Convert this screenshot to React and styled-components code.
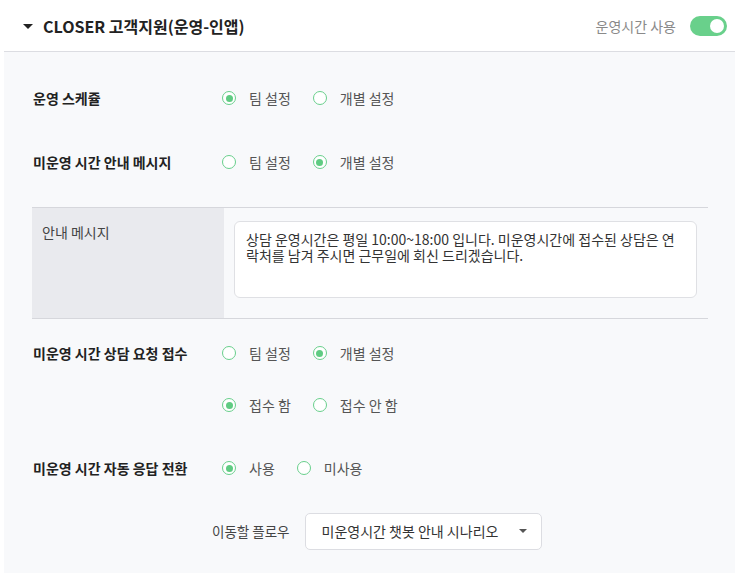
import React, { useState } from "react"
import styled, { createGlobalStyle } from "styled-components"

const GlobalStyle = createGlobalStyle`
  html, body {
    margin: 0;
    padding: 0;
    background: #ffffff;
  }
  body {
    font-family: "Noto Sans CJK KR", "Noto Sans", sans-serif;
    color: #222;
  }
`

const Page = styled.div`
  width: 738px;
  height: 573px;
  overflow: hidden;
  padding: 0 3px 0 4px;
  box-sizing: border-box;
`

const Header = styled.div`
  display: flex;
  align-items: center;
  height: 51px;
  padding: 0 8px 0 19px;
  border-bottom: 1px solid #dcdde2;
`

const Caret = styled.span`
  width: 0;
  height: 0;
  border-left: 5px solid transparent;
  border-right: 5px solid transparent;
  border-top: 5px solid #222;
  margin-right: 10px;
  margin-top: 1px;
`

const Title = styled.h2`
  margin: 0;
  font-size: 16px;
  font-weight: 700;
  color: #222;
`

const HeaderRight = styled.div`
  margin-left: auto;
  display: flex;
  align-items: center;
  gap: 14px;
  font-size: 14px;
  color: #8a8a8a;
`

const Toggle = styled.button`
  position: relative;
  width: 37px;
  height: 20px;
  border: 0;
  padding: 0;
  border-radius: 10px;
  background: ${p => (p.$on ? "#69d08b" : "#cfd2d8")};
  cursor: pointer;

  &::after {
    content: "";
    position: absolute;
    top: 3px;
    left: ${p => (p.$on ? "20px" : "3px")};
    width: 14px;
    height: 14px;
    border-radius: 50%;
    background: #fff;
  }
`

const Panel = styled.div`
  background: #f8f9fb;
  padding: 14px 27px 20px 28px;
  min-height: 522px;
  box-sizing: border-box;
`

const Row = styled.div`
  display: flex;
  align-items: center;
  height: ${p => p.$h || 64}px;
  margin-top: ${p => p.$mt || 0}px;
`

const Label = styled.div`
  width: 189px;
  flex-shrink: 0;
  padding-left: 1px;
  font-size: 14px;
  font-weight: 700;
  color: #222;
`

const RadioGroup = styled.div`
  display: flex;
  align-items: center;
  gap: 22px;
  padding-left: ${p => (p.$indent ? "190px" : "0")};
`

const RadioItem = styled.label`
  display: flex;
  align-items: center;
  gap: 13px;
  font-size: 14px;
  color: #555;
  cursor: pointer;
`

const Circle = styled.span`
  width: 14px;
  height: 14px;
  border-radius: 50%;
  border: 1px solid #69cf8c;
  background: #fff;
  box-sizing: border-box;
  display: flex;
  align-items: center;
  justify-content: center;

  &::after {
    content: "";
    width: 7px;
    height: 7px;
    border-radius: 50%;
    background: ${p => (p.$checked ? "#5fcb82" : "transparent")};
  }
`

const MessageBlock = styled.div`
  display: flex;
  margin: 13px 0 8px 0;
  border-top: 1px solid #d6d7dc;
  border-bottom: 1px solid #d6d7dc;
  height: 112px;
  box-sizing: border-box;
`

const MessageLabel = styled.div`
  width: 192px;
  background: #e9eaee;
  padding: 14px 10px;
  box-sizing: border-box;
  font-size: 14px;
  color: #444;
`

const MessageBody = styled.div`
  flex: 1;
  padding: 13px 11px 0 10px;
`

const TextBox = styled.div`
  height: 77px;
  background: #fff;
  border: 1px solid #dfe0e4;
  border-radius: 6px;
  padding: 9px 11px;
  box-sizing: border-box;
  font-size: 14px;
  line-height: 16px;
  color: #333;
  word-break: break-all;
`

const FlowRow = styled.div`
  display: flex;
  align-items: center;
  height: 62px;
  padding-left: 180px;
  gap: 15px;
`

const FlowLabel = styled.span`
  font-size: 13.5px;
  color: #444;
`

const Select = styled.div`
  width: 237px;
  height: 37px;
  box-sizing: border-box;
  border: 1px solid #dcdde2;
  border-radius: 5px;
  background: #fff;
  display: flex;
  align-items: center;
  padding: 0 14px 0 16px;
  font-size: 14px;
  color: #333;
`

const SelectCaret = styled.span`
  margin-left: auto;
  width: 0;
  height: 0;
  border-left: 4px solid transparent;
  border-right: 4px solid transparent;
  border-top: 4px solid #555;
`

const Radio = ({ checked, children }) => (
  <RadioItem>
    <Circle $checked={checked} />
    {children}
  </RadioItem>
)

export default function App() {
  const [on, setOn] = useState(true)

  return (
    <Page>
      <GlobalStyle />
      <Header>
        <Caret />
        <Title>CLOSER 고객지원(운영-인앱)</Title>
        <HeaderRight>
          운영시간 사용
          <Toggle $on={on} onClick={() => setOn(!on)} />
        </HeaderRight>
      </Header>
      <Panel>
        <Row>
          <Label>운영 스케쥴</Label>
          <RadioGroup>
            <Radio checked>팀 설정</Radio>
            <Radio>개별 설정</Radio>
          </RadioGroup>
        </Row>
        <Row>
          <Label>미운영 시간 안내 메시지</Label>
          <RadioGroup>
            <Radio>팀 설정</Radio>
            <Radio checked>개별 설정</Radio>
          </RadioGroup>
        </Row>
        <MessageBlock>
          <MessageLabel>안내 메시지</MessageLabel>
          <MessageBody>
            <TextBox>
              상담 운영시간은 평일 10:00~18:00 입니다. 미운영시간에 접수된 상담은 연락처를 남겨 주시면 근무일에 회신 드리겠습니다.
            </TextBox>
          </MessageBody>
        </MessageBlock>
        <Row $h={52}>
          <Label>미운영 시간 상담 요청 접수</Label>
          <RadioGroup>
            <Radio>팀 설정</Radio>
            <Radio checked>개별 설정</Radio>
          </RadioGroup>
        </Row>
        <Row $h={52}>
          <RadioGroup $indent>
            <Radio checked>접수 함</Radio>
            <Radio>접수 안 함</Radio>
          </RadioGroup>
        </Row>
        <Row $mt={5}>
          <Label>미운영 시간 자동 응답 전환</Label>
          <RadioGroup>
            <Radio checked>사용</Radio>
            <Radio>미사용</Radio>
          </RadioGroup>
        </Row>
        <FlowRow>
          <FlowLabel>이동할 플로우</FlowLabel>
          <Select>
            미운영시간 챗봇 안내 시나리오
            <SelectCaret />
          </Select>
        </FlowRow>
      </Panel>
    </Page>
  )
}
